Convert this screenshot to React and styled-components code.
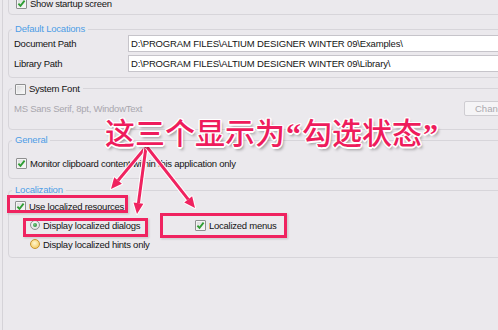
import styled, { createGlobalStyle } from "styled-components";

const GlobalStyle = createGlobalStyle`
  html, body {
    margin: 0;
    padding: 0;
    background: #ebe9ed;
    overflow: hidden;
  }
  body {
    font-family: "Liberation Sans", Arial, sans-serif;
    color: #141414;
  }
`;

const Screen = styled.div`
  position: relative;
  width: 498px;
  height: 330px;
  overflow: hidden;
  background: #ebe9ed;
`;

const Panel = styled.div`
  margin-left: 2px;
  border-left: 1px solid #d5d3d8;
  padding-left: 5px;
  height: 340px;
  width: 560px;
  display: flex;
  flex-direction: column;
`;

const Group = styled.fieldset`
  width: 540px;
  box-sizing: border-box;
  margin: ${(p) => p.$gap}px 0 0;
  padding: ${(p) => p.$pt}px 5px ${(p) => p.$pb}px;
  border: 1px solid #d7d5da;
  border-radius: 4px;
  min-width: 0;
`;

const Legend = styled.legend`
  padding: 0 3px;
  margin-left: -2px;
  height: 12px;
  line-height: 12px;
  font-size: 9.5px;
  letter-spacing: -0.2px;
  color: ${(p) => (p.$plain ? "#141414" : "#4d9de6")};
`;

const Text = styled.span`
  font-size: 9.5px;
  letter-spacing: -0.25px;
  white-space: nowrap;
  color: ${(p) => (p.$muted ? "#a9a7ad" : "inherit")};
`;

const PathGrid = styled.div`
  display: grid;
  grid-template-columns: 114px 1fr;
  row-gap: 3px;
  align-items: center;
`;

const PathInput = styled.input`
  height: 17px;
  box-sizing: border-box;
  border: 1px solid #c6c4ca;
  background: #fff;
  padding: 0 2px;
  margin: 0;
  font-family: "Liberation Sans", Arial, sans-serif;
  font-size: 9.5px;
  letter-spacing: -0.15px;
  color: #141414;
  outline: none;
`;

const Row = styled.div`
  display: flex;
  align-items: center;
  height: ${(p) => p.$h || 14}px;
  margin-top: ${(p) => p.$mt || 0}px;
`;

const Option = styled.label`
  display: inline-flex;
  align-items: center;
  gap: 3px;
  height: 14px;
  margin-left: ${(p) => p.$indent || 0}px;
  width: ${(p) => (p.$w ? `${p.$w}px` : "auto")};
  flex: none;
`;

const Box = styled.span`
  width: 11px;
  height: 11px;
  box-sizing: border-box;
  border: 1px solid #8e8f90;
  border-radius: 1px;
  background: linear-gradient(135deg, #d9d9db, #fbfbfb);
  box-shadow: inset 0 0 0 1px #f4f4f4;
  display: inline-flex;
  align-items: center;
  justify-content: center;
  flex: none;
`;

const Radio = styled.span`
  width: 10px;
  height: 10px;
  box-sizing: border-box;
  border-radius: 50%;
  border: 1px solid ${(p) => (p.$hot ? "#c9942c" : "#8e8f90")};
  background: ${(p) =>
    p.$hot
      ? "radial-gradient(circle at 45% 40%, #fff6cf, #f2c24a)"
      : "radial-gradient(circle at 45% 40%, #ffffff, #d6d6d8)"};
  display: inline-flex;
  align-items: center;
  justify-content: center;
  flex: none;
`;

const Dot = styled.span`
  width: 4px;
  height: 4px;
  border-radius: 50%;
  background: radial-gradient(circle at 40% 40%, #6fcf7c, #1f6a30);
`;

const Button = styled.div`
  margin-left: auto;
  width: 78px;
  height: 15px;
  box-sizing: border-box;
  border: 1px solid #cfcdd2;
  border-radius: 2px;
  background: #f5f4f6;
  font-size: 9.5px;
  line-height: 13px;
  color: #aaa8ae;
  padding-left: 10px;
`;

const Overlay = styled.div`
  position: absolute;
  inset: 0;
  pointer-events: none;
`;

const Callout = styled.div`
  position: absolute;
  left: 105px;
  top: 113px;
  font-family: "Noto Sans CJK SC", sans-serif;
  font-size: 30px;
  font-weight: 500;
  line-height: 36px;
  color: #ee1c5c;
  white-space: nowrap;
  text-shadow: -1px -1px 0 #fff, 1px -1px 0 #fff, -1px 1px 0 #fff,
    1px 1px 0 #fff, 0 -1.5px 0 #fff, 0 1.5px 0 #fff, -1.5px 0 0 #fff,
    1.5px 0 0 #fff, 2px 3px 3px rgba(0, 0, 0, 0.35);
`;

const Quote = styled.span`
  font-family: "Liberation Serif", serif;
  font-weight: 700;
  margin: 0 1px;
`;

const Mark = styled.div`
  position: absolute;
  left: ${(p) => p.$x}px;
  top: ${(p) => p.$y}px;
  width: ${(p) => p.$w}px;
  height: ${(p) => p.$h}px;
  box-sizing: border-box;
  border: 3px solid #ef2360;
  box-shadow: 0 0 1px rgba(255, 255, 255, 0.9), 1px 1px 2px rgba(0, 0, 0, 0.2);
`;

const ArrowLayer = styled.svg`
  position: absolute;
  left: 0;
  top: 0;
`;

function Check() {
  return (
    <Box>
      <svg width="9" height="9" viewBox="0 0 9 9">
        <path d="M1.4 4.6 L3.5 6.9 L7.6 1.6" stroke="#2e9e32" strokeWidth="1.8" fill="none" />
      </svg>
    </Box>
  );
}

function Arrow({ from, to }) {
  const [x1, y1] = from;
  const [x2, y2] = to;
  const a = Math.atan2(y2 - y1, x2 - x1);
  const len = 11;
  const half = 5;
  const bx = x2 - Math.cos(a) * len;
  const by = y2 - Math.sin(a) * len;
  const px = -Math.sin(a) * half;
  const py = Math.cos(a) * half;
  const head = `${x2},${y2} ${bx + px},${by + py} ${bx - px},${by - py}`;
  return (
    <g>
      <line x1={x1} y1={y1} x2={bx} y2={by} stroke="#fff" strokeWidth="5" />
      <polygon points={head} fill="#fff" stroke="#fff" strokeWidth="2" strokeLinejoin="round" />
      <line x1={x1} y1={y1} x2={bx} y2={by} stroke="#ef2360" strokeWidth="3" />
      <polygon points={head} fill="#ef2360" />
    </g>
  );
}

export default function App() {
  return (
    <Screen>
      <GlobalStyle />
      <Panel>
        <Group $gap={-5} $pt={0} $pb={4}>
          <Row>
            <Option $indent={2}>
              <Check />
              <Text>Show startup screen</Text>
            </Option>
          </Row>
        </Group>

        <Group $gap={8} $pt={0} $pb={5}>
          <Legend>Default Locations</Legend>
          <PathGrid>
            <Text>Document Path</Text>
            <PathInput readOnly value="D:\PROGRAM FILES\ALTIUM DESIGNER WINTER 09\Examples\" />
            <Text>Library Path</Text>
            <PathInput readOnly value="D:\PROGRAM FILES\ALTIUM DESIGNER WINTER 09\Library\" />
          </PathGrid>
        </Group>

        <Group $gap={4} $pt={7} $pb={13}>
          <Legend $plain>
            <Option>
              <Box />
              <Text>System Font</Text>
            </Option>
          </Legend>
          <Row $h={15}>
            <Text $muted>MS Sans Serif, 8pt, WindowText</Text>
            <Button>Change...</Button>
          </Row>
        </Group>

        <Group $gap={4} $pt={10} $pb={8}>
          <Legend>General</Legend>
          <Row>
            <Option $indent={2}>
              <Check />
              <Text>Monitor clipboard content within this application only</Text>
            </Option>
          </Row>
        </Group>

        <Group $gap={5} $pt={3} $pb={6}>
          <Legend>Localization</Legend>
          <Row>
            <Option $indent={1}>
              <Check />
              <Text>Use localized resources</Text>
            </Option>
          </Row>
          <Row $mt={5}>
            <Option $indent={16} $w={165}>
              <Radio>
                <Dot />
              </Radio>
              <Text>Display localized dialogs</Text>
            </Option>
            <Option>
              <Check />
              <Text>Localized menus</Text>
            </Option>
          </Row>
          <Row $mt={5}>
            <Option $indent={16}>
              <Radio $hot />
              <Text>Display localized hints only</Text>
            </Option>
          </Row>
        </Group>
      </Panel>

      <Overlay>
        <ArrowLayer width="498" height="330">
          <Arrow from={[146, 147]} to={[111, 189]} />
          <Arrow from={[146, 147]} to={[137, 214]} />
          <Arrow from={[147, 147]} to={[195, 208]} />
        </ArrowLayer>
        <Mark $x={7} $y={195} $w={121} $h={18} />
        <Mark $x={23} $y={218} $w={125} $h={19} />
        <Mark $x={160} $y={213} $w={127} $h={25} />
        <Callout>
          这三个显示为<Quote>“</Quote>勾选状态<Quote>”</Quote>
        </Callout>
      </Overlay>
    </Screen>
  );
}
